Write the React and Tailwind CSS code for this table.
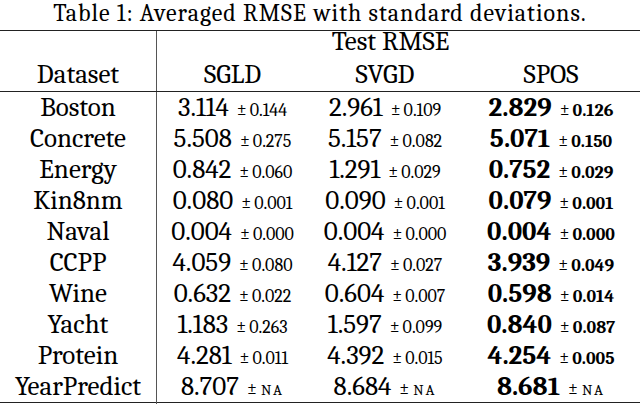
import React from 'react';

// dataset, sgld, sgld sd, svgd, svgd sd, spos, spos sd
const rows = [
  ['Boston', '3.114', '0.144', '2.961', '0.109', '2.829', '0.126'],
  ['Concrete', '5.508', '0.275', '5.157', '0.082', '5.071', '0.150'],
  ['Energy', '0.842', '0.060', '1.291', '0.029', '0.752', '0.029'],
  ['Kin8nm', '0.080', '0.001', '0.090', '0.001', '0.079', '0.001'],
  ['Naval', '0.004', '0.000', '0.004', '0.000', '0.004', '0.000'],
  ['CCPP', '4.059', '0.080', '4.127', '0.027', '3.939', '0.049'],
  ['Wine', '0.632', '0.022', '0.604', '0.007', '0.598', '0.014'],
  ['Yacht', '1.183', '0.263', '1.597', '0.099', '0.840', '0.087'],
  ['Protein', '4.281', '0.011', '4.392', '0.015', '4.254', '0.005'],
  ['YearPredict', '8.707', 'NA', '8.684', 'NA', '8.681', 'NA'],
];

const Val = ({ v, sd, bold }) => (
  <span className="whitespace-nowrap">
    <span className={bold ? 'font-bold' : ''}>{v}</span>
    <span className="ml-[8px] text-[18px]">±</span>
    {sd === 'NA' ? (
      <span className="ml-[4px] text-[15px] tracking-[2px]">NA</span>
    ) : (
      <span className={'ml-[3px] text-[18px] ' + (bold ? 'font-bold' : '')}>{sd}</span>
    )}
  </span>
);

export default function App() {
  return (
    <div className="w-[640px] h-[404px] bg-white text-black overflow-hidden font-serif">
      {/* caption */}
      <div className="h-[30px] text-center text-[24px] leading-[27px] tracking-[1px]">
        Table 1: Averaged RMSE with standard deviations.
      </div>

      <div className="border-t border-b border-[#222] text-[27px]">
        <div className="grid grid-cols-[157px_483px]">
          <div className="border-r border-[#555]" />
          <div className="h-[21px] leading-[21px] text-center pr-[16px]">Test RMSE</div>
        </div>
        <div className="grid grid-cols-[157px_151px_154px_178px] h-[40px] border-b border-[#222]">
          <div className="border-r border-[#555] text-center pt-[7px] leading-[31px]">Dataset</div>
          <div className="text-center pt-[7px] leading-[31px]">SGLD</div>
          <div className="text-center pt-[7px] leading-[31px]">SVGD</div>
          <div className="text-center pt-[7px] leading-[31px]">SPOS</div>
        </div>

        {rows.map((r) => (
          <div key={r[0]} className="grid grid-cols-[157px_151px_154px_178px] h-[31px] leading-[32px]">
            <div className="border-r border-[#555] text-center">{r[0]}</div>
            <div className="text-center">
              <Val v={r[1]} sd={r[2]} />
            </div>
            <div className="text-center">
              <Val v={r[3]} sd={r[4]} />
            </div>
            <div className="text-center">
              <Val v={r[5]} sd={r[6]} bold />
            </div>
          </div>
        ))}
      </div>
    </div>
  );
}
